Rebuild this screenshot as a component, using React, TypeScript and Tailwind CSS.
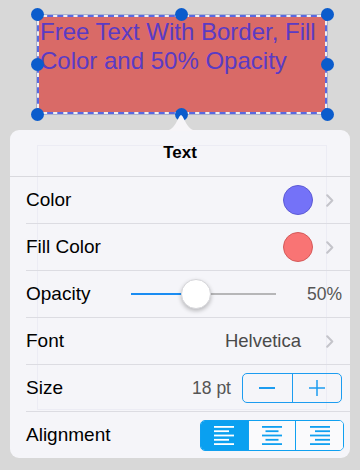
import React from "react";

const FONT = { fontFamily: '"Liberation Sans", Arial, Helvetica, sans-serif' };

function Chevron() {
  return (
    <svg width="8" height="13" viewBox="0 0 8 13" className="mr-[4px] shrink-0">
      <path d="M1.2 1.2 L6.3 6.5 L1.2 11.8" fill="none" stroke="#c4c4ca" strokeWidth="2" strokeLinecap="round" strokeLinejoin="round" />
    </svg>
  );
}

function AlignIcon({ kind, color }: { kind: "left" | "center" | "right"; color: string }) {
  const ys = [0, 4.3, 8.6, 12.9, 17.2];
  return (
    <svg width="20" height="19" viewBox="0 0 20 19">
      {ys.map((y, i) => {
        const long = i % 2 === 0;
        let x = 0;
        let w = 20;
        if (kind === "left") {
          x = 0;
          w = long ? 20 : 15;
        } else if (kind === "center") {
          w = long ? 20 : 13;
          x = (20 - w) / 2;
        } else {
          w = long ? 20 : 15;
          x = 20 - w;
        }
        return <rect key={i} x={x} y={y} width={w} height={1.8} fill={color} />;
      })}
    </svg>
  );
}

function Row({ children, last }: { children: React.ReactNode; last?: boolean }) {
  return (
    <div
      className={
        "ml-[16px] pr-[12px] h-[47px] flex items-center " +
        (last ? "" : "border-b border-[#dcdce2]")
      }
    >
      {children}
    </div>
  );
}

function Handle({ cls }: { cls: string }) {
  return <div className={"absolute w-[13px] h-[13px] rounded-full bg-[#0b5ccc] " + cls} />;
}

export default function App() {
  return (
    <div className="w-[360px] h-[470px] bg-[#d8d8d8] overflow-hidden" style={FONT}>
      <div className="pt-[14px] pl-[36px]">
        <div className="relative w-[292px] h-[101px] border border-[#a9b1cc] bg-[#efeff1]">
          <div className="h-full border-2 border-dashed border-[#5a68e0] bg-[#d96a67] bg-clip-padding">
            <div className="pl-[1px] text-[24px] leading-[29px] text-[#5a3bc4]">
              Free Text With Border, Fill Color and 50% Opacity
            </div>
          </div>
          <Handle cls="left-[-6.5px] top-[-7.5px]" />
          <Handle cls="left-[137.5px] top-[-7.5px]" />
          <Handle cls="left-[283.5px] top-[-7.5px]" />
          <Handle cls="left-[-6.5px] top-[42.5px]" />
          <Handle cls="left-[283.5px] top-[42.5px]" />
          <Handle cls="left-[-6.5px] top-[92.5px]" />
          <Handle cls="left-[137.5px] top-[92.5px]" />
          <Handle cls="left-[283.5px] top-[92.5px]" />
        </div>
      </div>

      <div className="relative mx-[10px] mt-[15px] h-[328px] rounded-[9px] bg-[#f5f5f9]">
        <svg
          width="36"
          height="18"
          viewBox="0 0 36 18"
          className="absolute left-[153px] top-[-17px]"
        >
          <path d="M0 18 C8 18 11 14 14 8 C16 4 17 2 18 2 C19 2 20 4 22 8 C25 14 28 18 36 18 Z" fill="#f7f5f8" />
        </svg>

        {/* faint ghost of the page behind the translucent popover */}
        <div className="absolute inset-0 overflow-hidden rounded-[9px] pointer-events-none">
          <div className="absolute left-[27px] top-[15px] w-[290px] h-[265px] border border-[#ececf4]" />
        </div>

        <div className="relative">
          <div className="h-[47px] border-b border-[#d9d9de] flex items-center justify-center text-[17px] font-bold text-black">
            Text
          </div>

          <Row>
            <span className="text-[19px] text-black">Color</span>
            <div className="flex-1" />
            <div className="w-[30px] h-[30px] rounded-full bg-[#7472f8] border border-[#5d5bd4]" />
            <div className="w-[13px]" />
            <Chevron />
          </Row>

          <Row>
            <span className="text-[19px] text-black">Fill Color</span>
            <div className="flex-1" />
            <div className="w-[30px] h-[30px] rounded-full bg-[#f97474] border border-[#d45a5a]" />
            <div className="w-[13px]" />
            <Chevron />
          </Row>

          <Row>
            <span className="text-[19px] text-black w-[105px] shrink-0">Opacity</span>
            <div className="relative w-[145px] h-[30px] flex items-center">
              <div className="h-[2px] w-[65px] bg-[#1a8cf2]" />
              <div className="h-[2px] flex-1 bg-[#b6b6b8]" />
              <div className="absolute left-[50px] top-0 w-[30px] h-[30px] rounded-full bg-white border border-[#d6d6da] shadow-[0_2px_4px_rgba(0,0,0,0.25)]" />
            </div>
            <div className="flex-1" />
            <span className="text-[17.5px] text-[#555] mr-[-4px]">50%</span>
          </Row>

          <Row>
            <span className="text-[19px] text-black">Font</span>
            <div className="flex-1" />
            <span className="text-[18.5px] text-[#4a4a4a]">Helvetica</span>
            <div className="w-[25px]" />
            <Chevron />
          </Row>

          <Row>
            <span className="text-[19px] text-black">Size</span>
            <div className="flex-1" />
            <span className="text-[17.5px] text-[#555]">18 pt</span>
            <div className="w-[11px]" />
            <div className="mr-[-4px] flex w-[100px] h-[30px] rounded-[5px] border border-[#1c9cf0]">
              <div className="flex-1 flex items-center justify-center border-r border-[#1c9cf0]">
                <div className="w-[16px] h-[1.5px] bg-[#1c9cf0]" />
              </div>
              <div className="flex-1 flex items-center justify-center">
                <svg width="16" height="16" viewBox="0 0 16 16">
                  <rect x="0" y="7.25" width="16" height="1.5" fill="#1c9cf0" />
                  <rect x="7.25" y="0" width="1.5" height="16" fill="#1c9cf0" />
                </svg>
              </div>
            </div>
          </Row>

          <Row last>
            <span className="text-[19px] text-black">Alignment</span>
            <div className="flex-1" />
            <div className="mr-[-6px] flex w-[144px] h-[31px] rounded-[5px] border border-[#10a0f0] overflow-hidden">
              <div className="flex-1 flex items-center justify-center bg-[#0aa0f0] border-r border-[#10a0f0]">
                <AlignIcon kind="left" color="#ffffff" />
              </div>
              <div className="flex-1 flex items-center justify-center bg-[#fafafc] border-r border-[#10a0f0]">
                <AlignIcon kind="center" color="#10a0f0" />
              </div>
              <div className="flex-1 flex items-center justify-center bg-[#fafafc]">
                <AlignIcon kind="right" color="#10a0f0" />
              </div>
            </div>
          </Row>
        </div>
      </div>
    </div>
  );
}
